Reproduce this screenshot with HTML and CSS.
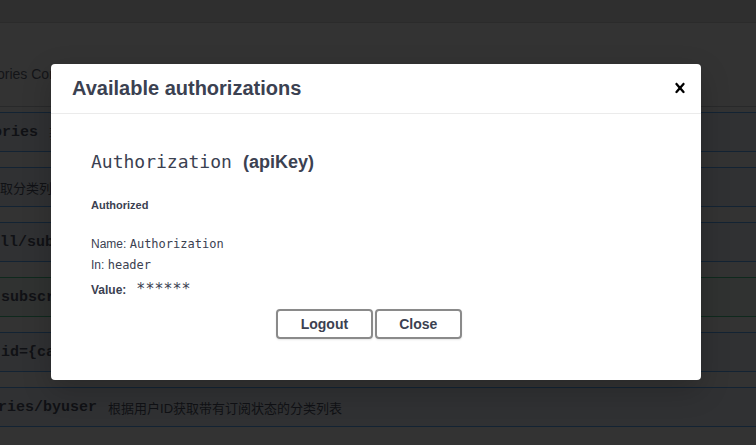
FILE: index.html
```html
<!DOCTYPE html>
<html lang="zh-CN">
<head>
<meta charset="utf-8">
<title>Available authorizations</title>
<link rel="stylesheet" href="styles.css">
</head>
<body>
<div class="page">
  <div class="topband"></div>
  <div class="tag">
    <span class="tag-desc">ories Controller</span>
  </div>
  <div class="ops">
    <div class="op"><span class="path shift-a">ories</span><span class="desc">获取分类列表</span></div>
    <div class="op"><span class="desc shift-b">获取分类列表</span></div>
    <div class="op"><span class="path shift-c">ll/subscribed</span></div>
    <div class="op op-post"><span class="path shift-d">subscribe</span></div>
    <div class="op"><span class="path shift-e">id={categoryId}</span></div>
    <div class="op"><span class="path shift-f">ries/byuser</span><span class="desc">根据用户ID获取带有订阅状态的分类列表</span></div>
  </div>
</div>

<div class="modal">
  <div class="modal-header">
    <h3 class="modal-title">Available authorizations</h3>
    <button class="close-modal" type="button" aria-label="Close">
      <svg width="20" height="20" viewBox="0 0 20 20" aria-hidden="true">
        <path d="M14.348 14.849c-.469.469-1.229.469-1.697 0L10 11.819l-2.651 3.029c-.469.469-1.229.469-1.697 0-.469-.469-.469-1.229 0-1.697l2.758-3.15-2.759-3.152c-.469-.469-.469-1.228 0-1.697.469-.469 1.228-.469 1.697 0L10 8.183l2.651-3.031c.469-.469 1.228-.469 1.697 0 .469.469.469 1.229 0 1.697l-2.758 3.152 2.758 3.15c.469.469.469 1.229 0 1.698z"/>
      </svg>
    </button>
  </div>
  <div class="modal-body">
    <h4 class="auth-name"><code class="auth-code">Authorization</code><span class="auth-type">(apiKey)</span></h4>
    <h6 class="auth-state">Authorized</h6>
    <p class="auth-line"><span>Name:</span> <code class="mono">Authorization</code></p>
    <p class="auth-line"><span>In:</span> <code class="mono">header</code></p>
    <p class="auth-line auth-value"><span class="value-label">Value:</span><code class="stars">******</code></p>
    <div class="btn-wrapper">
      <button class="btn" type="button">Logout</button>
      <button class="btn btn-done" type="button">Close</button>
    </div>
  </div>
</div>
</body>
</html>
```

FILE: styles.css
```css
html, body {
  margin: 0;
  padding: 0;
}

body {
  width: 756px;
  height: 445px;
  overflow: hidden;
  background: #333333;
  font-family: "Liberation Sans", Arial, "Noto Sans CJK SC", sans-serif;
  color: #3b4151;
  position: relative;
}

.page {
  width: 756px;
  overflow: hidden;
}

.topband {
  height: 22px;
  background: #2f2f2f;
  border-bottom: 1px solid #2b2b2b;
}

.tag {
  height: 84px;
  box-sizing: border-box;
  border-bottom: 1px solid #28292a;
  display: flex;
  align-items: center;
  padding-top: 19px;
}

.tag-desc {
  font-size: 14px;
  color: #141518;
  margin-left: -3px;
  white-space: nowrap;
}

.ops {
  padding-top: 5px;
}

.op {
  height: 40px;
  box-sizing: border-box;
  border-top: 1px solid #132333;
  border-bottom: 1px solid #132333;
  background: #303133;
  margin-bottom: 15px;
  display: flex;
  align-items: center;
  white-space: nowrap;
}

.op-post {
  border-color: #0f291d;
  background: #303231;
}

.path {
  font-family: "Liberation Mono", "Courier New", monospace;
  font-weight: 700;
  font-size: 15px;
  color: #101115;
}

.desc {
  font-family: "Liberation Sans", Arial, "Noto Sans CJK SC", sans-serif;
  font-size: 13px;
  color: #101115;
  margin-left: 11px;
}

.shift-a { margin-left: -7px; }
.shift-b { margin-left: -13px; }
.shift-c { margin-left: 0; }
.shift-d { margin-left: 1px; }
.shift-e { margin-left: 1px; }
.shift-f { margin-left: -2px; }

/* Modal */
.modal {
  position: absolute;
  left: 51px;
  top: 64px;
  width: 650px;
  height: 316px;
  background: #ffffff;
  border-radius: 4px;
  box-shadow: 0 10px 30px 0 rgba(0, 0, 0, 0.2);
  box-sizing: border-box;
  overflow: hidden;
}

.modal-header {
  height: 50px;
  box-sizing: border-box;
  display: flex;
  align-items: center;
  padding: 0 11px 0 21px;
  border-bottom: 1px solid #ebebeb;
}

.modal-title {
  flex: 1;
  margin: 0;
  font-size: 20px;
  font-weight: 700;
  color: #3b4151;
  font-family: "Liberation Sans", Arial, sans-serif;
}

.close-modal {
  border: none;
  background: none;
  padding: 0;
  width: 20px;
  height: 20px;
  display: flex;
  margin-top: -2px;
}

.close-modal svg {
  fill: #000000;
}

.modal-body {
  padding: 37px 40px 0 40px;
}

.auth-name {
  margin: 0;
  height: 22px;
  line-height: 22px;
  display: flex;
  align-items: baseline;
  font-size: 18px;
}

.auth-code {
  font-family: "DejaVu Sans Mono", monospace;
  font-size: 18px;
  font-weight: 400;
  color: #3b4151;
}

.auth-type {
  font-family: "Liberation Sans", Arial, sans-serif;
  font-weight: 700;
  font-size: 18px;
  color: #3b4151;
  margin-left: 11px;
}

.auth-state {
  margin: 25px 0 0 0;
  font-size: 11px;
  line-height: 14px;
  font-weight: 700;
  color: #3b4151;
}

.auth-line {
  margin: 0;
  font-size: 12px;
  line-height: 21px;
  color: #3b4151;
}

.auth-state + .auth-line {
  margin-top: 22px;
}

.mono {
  font-family: "DejaVu Sans Mono", monospace;
  font-size: 12px;
}

.auth-value {
  margin-top: 3px;
  display: flex;
  align-items: baseline;
}

.value-label {
  font-weight: 700;
}

.stars {
  font-family: "DejaVu Sans Mono", monospace;
  font-size: 15px;
  margin-left: 10px;
}

.btn-wrapper {
  display: flex;
  justify-content: center;
  gap: 2px;
  margin-top: 8px;
}

.btn {
  font-family: "Liberation Sans", Arial, sans-serif;
  font-size: 14px;
  font-weight: 700;
  line-height: 16px;
  color: #3b4151;
  background: transparent;
  border: 2px solid #8a8a8a;
  border-radius: 4px;
  padding: 5px 22.5px;
  box-shadow: 0 1px 2px rgba(0, 0, 0, 0.1);
  margin: 0;
}

.btn-done {
  margin-right: 14px;
}
```
